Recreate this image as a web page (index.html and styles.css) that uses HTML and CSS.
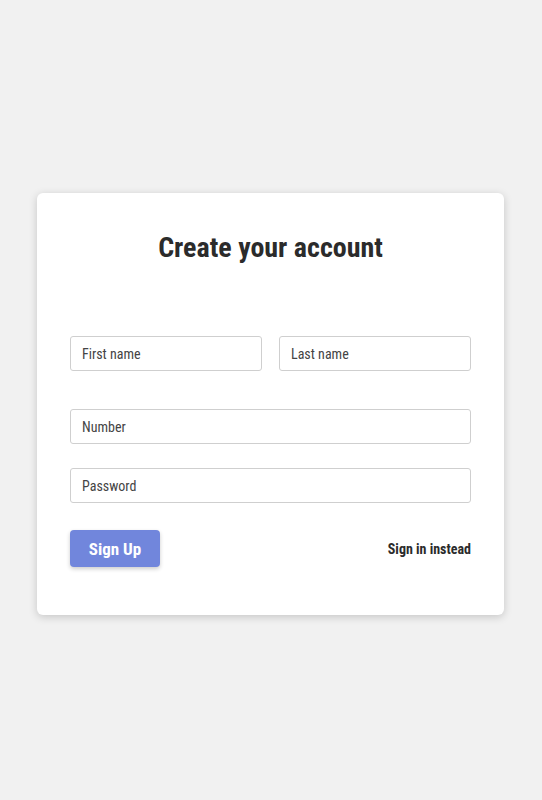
FILE: index.html
```html
<!DOCTYPE html>
<html>
<head>
<meta charset="utf-8">
<link rel="stylesheet" href="styles.css">
</head>
<body>
<div class="page">
  <form class="card">
    <h1 class="title">Create your account</h1>
    <div class="row two">
      <input class="field" type="text" placeholder="First name">
      <input class="field" type="text" placeholder="Last name">
    </div>
    <div class="row">
      <input class="field" type="text" placeholder="Number">
    </div>
    <div class="row tight">
      <input class="field" type="password" placeholder="Password">
    </div>
    <div class="actions">
      <button class="btn" type="button">Sign Up</button>
      <a class="link" href="#">Sign in instead</a>
    </div>
  </form>
</div>
</body>
</html>
```

FILE: styles.css
```css
* { box-sizing: border-box; }
html, body { margin: 0; padding: 0; }
body {
  background: #f1f1f1;
  font-family: "Roboto", "Liberation Sans", sans-serif;
  font-stretch: condensed;
  color: #2b2b2b;
}
.page {
  width: 542px;
  height: 800px;
  padding-top: 193px;
  padding-left: 37px;
}
.card {
  width: 467px;
  height: 422px;
  background: #fff;
  border-radius: 6px;
  box-shadow: 0 2px 8px rgba(0,0,0,0.18);
  padding: 33px 33px 0 33px;
  display: flex;
  flex-direction: column;
}
.title {
  margin: 0;
  text-align: center;
  font-size: 28px;
  font-weight: 700;
  line-height: 44px;
  color: #2b2b2b;
}
.row { display: flex; margin-top: 66px; }
.row + .row { margin-top: 38px; }
.row.tight { margin-top: 24px; }
.row.two { gap: 17px; }
.field {
  flex: 1;
  min-width: 0;
  height: 35px;
  border: 1px solid #cfcfcf;
  border-radius: 3px;
  padding: 0 11px;
  font-family: inherit;
  font-stretch: condensed;
  font-size: 14px;
  color: #333;
  outline: none;
  background: #fff;
}
.field::placeholder { color: #444; opacity: 1; }
.actions {
  margin-top: 27px;
  display: flex;
  justify-content: space-between;
  align-items: center;
}
.btn {
  width: 90px;
  height: 37px;
  border: none;
  border-radius: 4px;
  background: #7186dc;
  color: #fff;
  font-family: inherit;
  font-stretch: condensed;
  font-weight: 700;
  font-size: 17px;
  box-shadow: 0 2px 4px rgba(0,0,0,0.2);
  padding: 0;
}
.link {
  color: #2b2b2b;
  text-decoration: none;
  font-weight: 700;
  font-size: 14px;
}
```
